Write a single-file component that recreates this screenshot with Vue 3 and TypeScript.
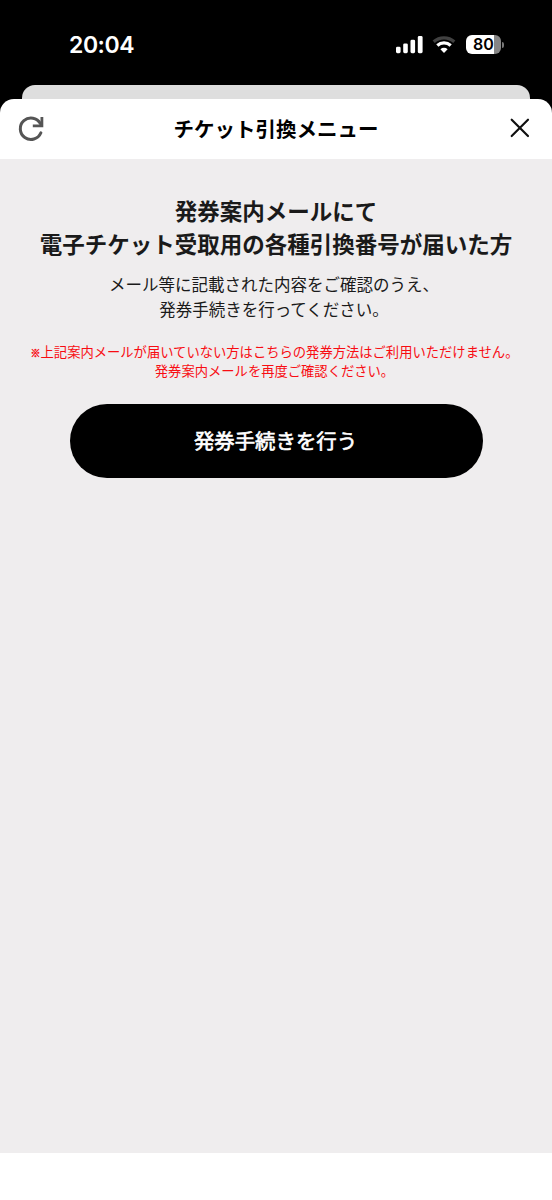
<script setup lang="ts">
const title = 'チケット引換メニュー'
const heading = ['発券案内メールにて', '電子チケット受取用の各種引換番号が届いた方']
const lead = ['メール等に記載された内容をご確認のうえ、', '発券手続きを行ってください。']
const noteFirst = '上記案内メールが届いていない方はこちらの発券方法はご利用いただけません。'
const noteSecond = '発券案内メールを再度ご確認ください。'
const action = '発券手続きを行う'
const battery = 80
</script>

<template>
  <div class="phone">
    <div class="status">
      <span class="clock">20:04</span>
      <div class="indicators">
        <svg class="signal" width="28" height="18" viewBox="0 0 28 18" fill="#fff">
          <rect x="0" y="10.7" width="4.6" height="6.5" rx="1.4" />
          <rect x="7.2" y="7.4" width="4.6" height="9.8" rx="1.4" />
          <rect x="14.5" y="3.7" width="4.6" height="13.5" rx="1.4" />
          <rect x="21.8" y="0" width="4.8" height="17.2" rx="1.4" />
        </svg>
        <svg class="wifi" width="24" height="18" viewBox="0 0 24 18">
          <path d="M1.7 5.8A15.2 15.2 0 0 1 22.3 5.8" fill="none" stroke="#414141" stroke-width="3.2" />
          <path d="M5.3 9.5A10 10 0 0 1 18.7 9.5" fill="none" stroke="#fff" stroke-width="3.2" />
          <path d="M12 16.9L8.4 13.3A5.2 5.2 0 0 1 15.6 13.3Z" fill="#fff" />
        </svg>
        <div class="battery">
          <div class="cell"><span class="level">{{ battery }}</span></div>
          <i class="tip"></i>
        </div>
      </div>
    </div>
    <div class="behind"></div>
    <section class="sheet">
      <header class="bar">
        <svg class="reload" width="28" height="28" viewBox="0 0 28 28" fill="none" stroke="#555" stroke-width="3">
          <path d="M22.9 17.8A10.7 10.7 0 1 1 22.4 8.6" stroke-linecap="round" />
          <path d="M23.9 2V10.8H14.8" stroke-width="2.8" />
        </svg>
        <h1>{{ title }}</h1>
        <svg class="close" width="20" height="20" viewBox="0 0 20 20" fill="none" stroke="#111" stroke-width="2.2" stroke-linecap="round">
          <path d="M1.7 1.7L18 18M18 1.7L1.7 18" />
        </svg>
      </header>
      <main class="content">
        <h2><span v-for="line in heading" :key="line">{{ line }}</span></h2>
        <p class="lead"><span v-for="line in lead" :key="line">{{ line }}</span></p>
        <p class="note">
          <span><small>※</small>{{ noteFirst }}</span>
          <span>{{ noteSecond }}</span>
        </p>
        <button type="button">{{ action }}</button>
      </main>
      <footer></footer>
    </section>
  </div>
</template>

<style>
body {
  margin: 0;
  background: #000;
}
</style>

<style scoped>
.phone {
  width: 552px;
  height: 1200px;
  display: flex;
  flex-direction: column;
  overflow: hidden;
  background: #000;
  font-family: "Liberation Sans", "Noto Sans CJK JP", sans-serif;
}
.status {
  box-sizing: border-box;
  height: 85px;
  flex: none;
  display: flex;
  justify-content: space-between;
  align-items: flex-start;
  padding: 31px 48px 0 69px;
  color: #fff;
}
.clock {
  font: 600 23px/28px Inter, sans-serif;
  letter-spacing: -0.45px;
}
.indicators {
  display: flex;
  align-items: flex-start;
  padding-top: 5px;
}
.wifi {
  margin-left: 8px;
}
.battery {
  display: flex;
  align-items: center;
  margin: -1px 0 0 10px;
}
.cell {
  width: 35px;
  height: 19px;
  border-radius: 6px;
  background: linear-gradient(90deg, #fff 28px, #858585 28px);
  text-align: center;
}
.level {
  display: block;
  font: 600 16px/19px Inter, sans-serif;
  letter-spacing: 0.2px;
  color: #000;
}
.tip {
  width: 2px;
  height: 6px;
  margin-left: 1px;
  border-radius: 0 2px 2px 0;
  background: #777;
}
.behind {
  flex: none;
  height: 14px;
  margin: 0 22px;
  border-radius: 13px 13px 0 0;
  background: #dedede;
}
.sheet {
  flex: 1;
  display: flex;
  flex-direction: column;
  border-radius: 14px 14px 0 0;
  background: #fff;
  overflow: hidden;
}
.bar {
  box-sizing: border-box;
  height: 60px;
  flex: none;
  display: grid;
  grid-template-columns: 60px 1fr 60px;
  align-items: center;
}
.reload {
  margin-left: 18px;
}
.close {
  margin: -2px 0 0 18px;
}
h1 {
  margin: 0;
  padding-top: 2px;
  text-align: center;
  font-size: 20.5px;
  line-height: 30px;
  font-weight: 600;
  color: #000;
}
.content {
  flex: 1;
  display: flex;
  flex-direction: column;
  align-items: center;
  padding-top: 37px;
  background: #efedee;
  color: #1a1a1a;
  text-align: center;
  white-space: nowrap;
}
.content span {
  display: block;
}
h2 {
  margin: 0;
  font-size: 22.5px;
  line-height: 33px;
  font-weight: 600;
}
.lead {
  margin: 11px 4px 0 0;
  font-size: 16.5px;
  line-height: 25px;
}
.note {
  margin: 20px 3px 0 0;
  font-size: 13.3px;
  line-height: 19px;
  color: #f80c12;
}
.note small {
  font-size: 10px;
  line-height: 1;
  -webkit-text-stroke: 0.4px;
}
button {
  width: 413px;
  height: 74px;
  margin: 23px 0 0;
  padding: 2px 1px 0 0;
  border: 0;
  border-radius: 37px;
  background: #000;
  color: #fff;
  font: 400 20.4px/30px "Liberation Sans", "Noto Sans CJK JP", sans-serif;
  -webkit-text-stroke: 0.65px;
}
footer {
  flex: none;
  height: 47px;
}
</style>
